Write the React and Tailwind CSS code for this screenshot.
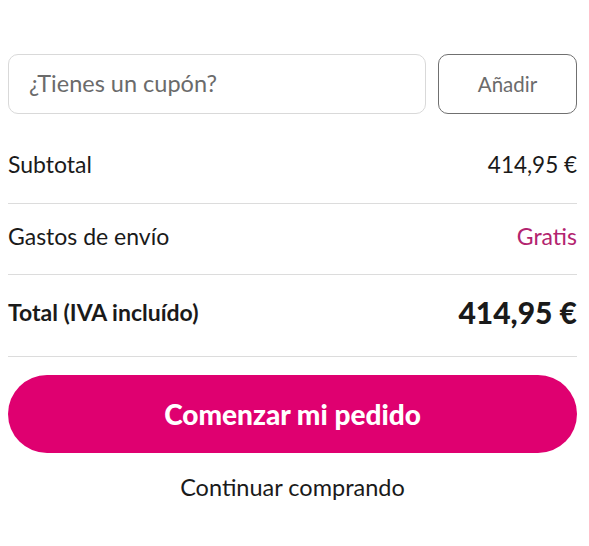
export default function App() {
  return (
    <div className="w-[589px] h-[546px] bg-white font-['Lato',sans-serif] text-[#1a1a1a]">
      <div className="pl-2 pr-3 pt-[54px]">
        <div className="flex gap-3 h-[60px]">
          <div className="flex-1 flex items-center rounded-[10px] border border-[#d9d9d9] pl-5 text-[23.5px] text-[#6b6b6b]">
            ¿Tienes un cupón?
          </div>
          <button className="w-[139px] rounded-[10px] border border-[#707070] text-[20.5px] text-[#6b6b6b]">
            Añadir
          </button>
        </div>
        <div className="flex justify-between items-center h-[90px] pt-[12px] border-b border-[#dcdcdc] text-[23px]">
          <span>Subtotal</span>
          <span className="text-[22.5px]">414,95 €</span>
        </div>
        <div className="flex justify-between items-center h-[71px] pb-[5px] border-b border-[#dcdcdc] text-[23px]">
          <span>Gastos de envío</span>
          <span className="text-[#b3246f]">Gratis</span>
        </div>
        <div className="flex justify-between items-center h-[82px] pb-[6px] border-b border-[#dcdcdc]">
          <span className="text-[23px] font-bold">Total (IVA incluído)</span>
          <span className="text-[30px] font-black">414,95 €</span>
        </div>
        <button className="mt-[18px] w-full h-[78px] rounded-full bg-[#df0070] text-white text-[28px] font-black">
          Comenzar mi pedido
        </button>
        <div className="text-center mt-[17px] text-[23.5px]">Continuar comprando</div>
      </div>
    </div>
  );
}
